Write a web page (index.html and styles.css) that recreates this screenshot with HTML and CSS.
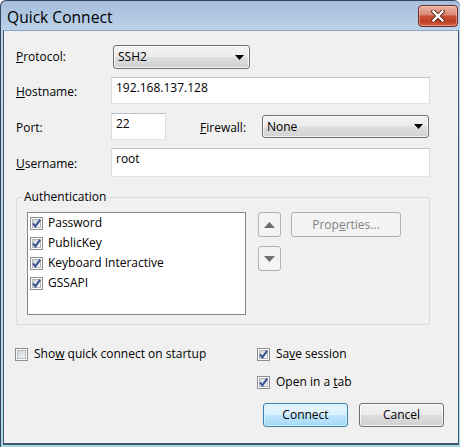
FILE: index.html
```html
<!DOCTYPE html>
<html>
<head>
<meta charset="utf-8">
<title>Quick Connect</title>
<link rel="stylesheet" href="styles.css">
</head>
<body>
<svg class="defs" width="0" height="0" aria-hidden="true">
  <defs>
    <linearGradient id="cbfill" x1="0" y1="0" x2="1" y2="1">
      <stop offset="0" stop-color="#cfd3d9"/>
      <stop offset="1" stop-color="#f7f8f9"/>
    </linearGradient>
    <symbol id="cbox" viewBox="0 0 13 13">
      <rect x="0.5" y="0.5" width="12" height="12" fill="#fdfdfd" stroke="#8e8f8f"/>
      <rect x="2.5" y="2.5" width="8" height="8" fill="url(#cbfill)" stroke="#b3b7bd"/>
    </symbol>
    <symbol id="cmark" viewBox="0 0 13 13">
      <path d="M3 6.4 L5.4 9.4 L10.2 2.6" fill="none" stroke="#3a5291" stroke-width="2" stroke-linejoin="miter"/>
    </symbol>
  </defs>
</svg>
<div class="window">
  <div class="titlebar">
    <span class="title">Quick Connect</span>
    <div class="close">
      <svg width="14" height="12" viewBox="0 0 14 12">
        <path d="M2.5 1.5 L11.5 10.5 M11.5 1.5 L2.5 10.5" stroke="#5a2418" stroke-width="4.2" stroke-linecap="square"/>
        <path d="M2.5 1.5 L11.5 10.5 M11.5 1.5 L2.5 10.5" stroke="#ffffff" stroke-width="2.4" stroke-linecap="square"/>
      </svg>
    </div>
  </div>
  <div class="client">
    <div class="row r1">
      <span class="lbl"><u>P</u>rotocol:</span>
      <div class="combo c-proto"><span>SSH2</span>
        <svg class="drop" width="9" height="5" viewBox="0 0 9 5"><path d="M0 0 H9 L4.5 5 Z" fill="#000"/></svg>
      </div>
    </div>
    <div class="row r2">
      <span class="lbl lo"><u>H</u>ostname:</span>
      <div class="field f-wide">192.168.137.128</div>
    </div>
    <div class="row r3">
      <span class="lbl lo">Port:</span>
      <div class="field f-port">22</div>
      <span class="lbl lo l-fw"><u>F</u>irewall:</span>
      <div class="combo c-fw"><span>None</span>
        <svg class="drop" width="9" height="5" viewBox="0 0 9 5"><path d="M0 0 H9 L4.5 5 Z" fill="#000"/></svg>
      </div>
    </div>
    <div class="row r4">
      <span class="lbl lo"><u>U</u>sername:</span>
      <div class="field f-wide">root</div>
    </div>

    <fieldset class="group">
      <legend>Authentication</legend>
      <div class="group-body">
        <div class="listbox">
          <div class="item"><svg class="cb"><use href="#cbox"/><use href="#cmark"/></svg><span>Password</span></div>
          <div class="item"><svg class="cb"><use href="#cbox"/><use href="#cmark"/></svg><span>PublicKey</span></div>
          <div class="item"><svg class="cb"><use href="#cbox"/><use href="#cmark"/></svg><span>Keyboard Interactive</span></div>
          <div class="item"><svg class="cb"><use href="#cbox"/><use href="#cmark"/></svg><span>GSSAPI</span></div>
        </div>
        <div class="arrows">
          <div class="btn-dis btn-arrow">
            <svg width="11" height="6" viewBox="0 0 11 6"><path d="M0 6 H11 L5.5 0 Z" fill="#6f6f6f"/></svg>
          </div>
          <div class="btn-dis btn-arrow">
            <svg width="11" height="6" viewBox="0 0 11 6"><path d="M0 0 H11 L5.5 6 Z" fill="#6f6f6f"/></svg>
          </div>
        </div>
        <div class="btn-dis btn-props">Prop<u>e</u>rties...</div>
      </div>
    </fieldset>

    <div class="bottom">
      <div class="col-left">
        <div class="check"><svg class="cb"><use href="#cbox"/></svg><span>Sho<u>w</u> quick connect on startup</span></div>
      </div>
      <div class="col-right">
        <div class="check"><svg class="cb"><use href="#cbox"/><use href="#cmark"/></svg><span>Sa<u>v</u>e session</span></div>
        <div class="check second"><svg class="cb"><use href="#cbox"/><use href="#cmark"/></svg><span>Open in a <u>t</u>ab</span></div>
        <div class="buttons">
          <div class="btn btn-default">Connect</div>
          <div class="btn">Cancel</div>
        </div>
      </div>
    </div>
  </div>
</div>
</body>
</html>
```

FILE: styles.css
```css
* { box-sizing: border-box; }

html, body {
  margin: 0;
  padding: 0;
}

body {
  width: 460px;
  height: 447px;
  overflow: hidden;
  background: #ffffff;
  font-family: "Open Sans", "Liberation Sans", sans-serif;
  font-size: 12px;
  color: #000;
}

.defs {
  position: absolute;
  width: 0;
  height: 0;
  overflow: hidden;
}

u {
  text-decoration: underline;
  text-underline-offset: 1px;
}

.window {
  width: 460px;
  height: 447px;
  display: flex;
  flex-direction: column;
  border-left: 1px solid #33455c;
  border-top: 1px solid #33455c;
  border-radius: 6px 6px 0 0;
  padding: 0 1px 2px 2px;
  background: linear-gradient(#a6bedb 0px, #bcd2ea 29px, #c2d7ec 60px, #b7d6e8 380px, #a7d6e4 447px);
}

.titlebar {
  height: 29px;
  flex: none;
  display: flex;
  align-items: flex-start;
  justify-content: space-between;
}

.title {
  margin-top: 5px;
  margin-left: 4px;
  font-size: 15.6px;
  line-height: 22px;
  color: #000;
}

.close {
  width: 40px;
  height: 22px;
  margin-top: 4px;
  margin-right: 1px;
  border: 1px solid #6e2b1f;
  border-radius: 4px;
  display: flex;
  align-items: center;
  justify-content: center;
  background: linear-gradient(#eeb1a2 0%, #dc8a77 42%, #c74f36 52%, #c03f25 78%, #d46448 100%);
  box-shadow: inset 0 0 0 1px rgba(255, 220, 210, 0.45);
}

.client {
  flex: 1;
  background: #f0f0f0;
  border: 1px solid #41566f;
  border-top-color: #8ea3bd;
  border-bottom-width: 2px;
  padding-left: 12px;
  display: flex;
  flex-direction: column;
}

.row {
  display: flex;
  align-items: center;
  flex: none;
}

.r1 { margin-top: 14px; height: 24px; }
.r2 { margin-top: 8px; height: 27px; }
.r3 { margin-top: 9px; height: 27px; }
.r4 { margin-top: 8px; height: 29px; }

.lbl {
  width: 95px;
  flex: none;
  line-height: 16px;
}

.lbl.lo { padding-top: 3px; }

.l-fw {
  width: 62px;
  margin-left: 34px;
}

.field {
  align-self: stretch;
  background: #ffffff;
  border: 1px solid;
  border-color: #b9c4d1 #d6dee8 #dde5ee #d6dee8;
  padding: 2px 4px 0 4px;
  line-height: 16px;
  white-space: nowrap;
}

.f-wide { width: 319px; }
.f-port { width: 55px; }

.combo {
  display: flex;
  align-items: center;
  justify-content: space-between;
  border: 1px solid #707070;
  border-radius: 3px;
  padding: 0 5px 0 4px;
  line-height: 16px;
  background: linear-gradient(#f3f3f3 0%, #ececec 48%, #dedede 52%, #d2d2d2 100%);
  box-shadow: inset 0 0 0 1px rgba(255, 255, 255, 0.7);
}

.c-proto {
  width: 137px;
  height: 24px;
  margin-left: 2px;
}

.c-fw {
  width: 167px;
  height: 23px;
}

.drop { flex: none; }

/* Group box */
.group {
  margin: 13px 0 0 0;
  width: 414px;
  border: 1px solid #d3dbe2;
  border-radius: 3px;
  padding: 0 0 9px 0;
  min-inline-size: 0;
}

.group legend {
  margin-left: 6px;
  padding: 0 1px;
  line-height: 14px;
}

.group-body {
  margin-top: 8px;
  padding-left: 10px;
  display: flex;
  align-items: flex-start;
}

.listbox {
  width: 219px;
  height: 103px;
  background: #ffffff;
  border: 1px solid #828790;
  padding-left: 2px;
  flex: none;
}

.item {
  height: 20px;
  display: flex;
  align-items: center;
  gap: 5px;
  line-height: 16px;
}

.cb {
  width: 13px;
  height: 13px;
  flex: none;
}

.arrows {
  margin-left: 12px;
  display: flex;
  flex-direction: column;
  gap: 9px;
}

.btn-dis {
  border: 1px solid #adb2b5;
  border-radius: 3px;
  background: #f4f4f4;
  display: flex;
  align-items: center;
  justify-content: center;
}

.btn-arrow {
  width: 23px;
  height: 25px;
}

.btn-props {
  margin-left: 10px;
  width: 110px;
  height: 25px;
  color: #838383;
  line-height: 16px;
}

/* Bottom area */
.bottom {
  display: flex;
  margin-top: 19px;
  margin-left: -1px;
}

.col-left {
  width: 242px;
  flex: none;
}

.col-right {
  display: flex;
  flex-direction: column;
}

.check {
  height: 20px;
  display: flex;
  align-items: center;
  gap: 6px;
  line-height: 16px;
  white-space: nowrap;
}

.check.second { margin-top: 8px; }

.buttons {
  margin-top: 11px;
  margin-left: 6px;
  display: flex;
  gap: 11px;
}

.btn {
  width: 85px;
  height: 24px;
  border: 1px solid #707070;
  border-radius: 3px;
  display: flex;
  align-items: center;
  justify-content: center;
  line-height: 16px;
  background: linear-gradient(#f2f2f2 0%, #ebebeb 48%, #dddddd 52%, #cfcfcf 100%);
  box-shadow: inset 0 0 0 1px rgba(255, 255, 255, 0.75);
}

.btn-default {
  border-color: #3c7fb1;
  background: linear-gradient(#eaf6fd 0%, #d9f0fc 48%, #bee6fd 52%, #a7d9f5 100%);
  box-shadow: inset 0 0 0 1px rgba(255, 255, 255, 0.6), inset 0 0 2px 1px rgba(80, 200, 240, 0.35);
}
```
